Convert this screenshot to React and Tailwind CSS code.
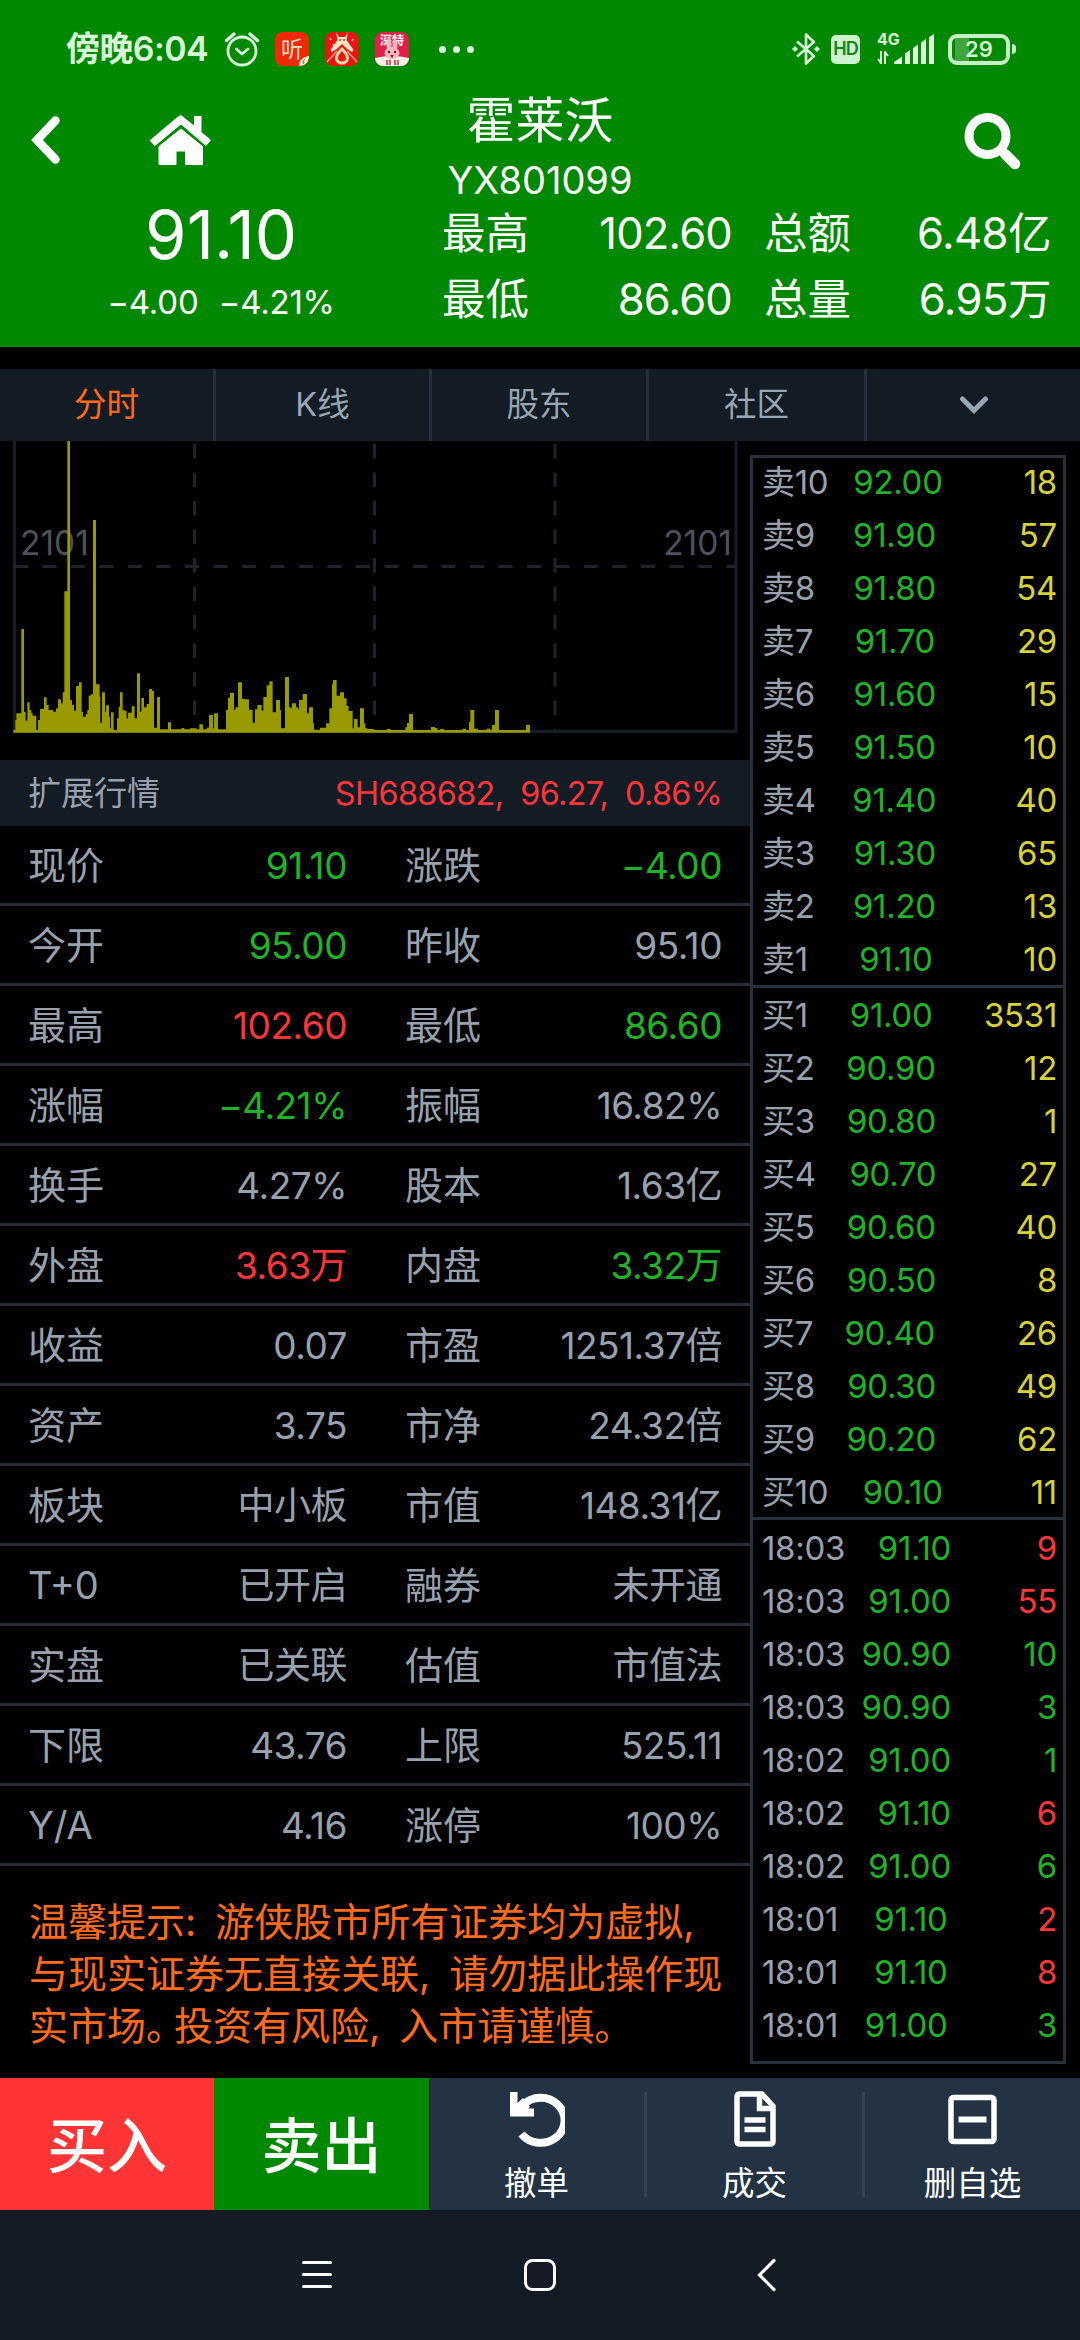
import React from 'react';

const tabs = ['分时', 'K线', '股东', '社区'];

const GREEN = 'text-[#1fb428]';
const RED = 'text-[#fb363b]';
const GRAY = 'text-[#98a1ae]';
const YELLOW = 'text-[#d6d238]';

const quoteRows = [
  ['现价', '91.10', GREEN, '涨跌', '−4.00', GREEN],
  ['今开', '95.00', GREEN, '昨收', '95.10', GRAY],
  ['最高', '102.60', RED, '最低', '86.60', GREEN],
  ['涨幅', '−4.21%', GREEN, '振幅', '16.82%', GRAY],
  ['换手', '4.27%', GRAY, '股本', '1.63亿', GRAY],
  ['外盘', '3.63万', RED, '内盘', '3.32万', GREEN],
  ['收益', '0.07', GRAY, '市盈', '1251.37倍', GRAY],
  ['资产', '3.75', GRAY, '市净', '24.32倍', GRAY],
  ['板块', '中小板', GRAY, '市值', '148.31亿', GRAY],
  ['T+0', '已开启', GRAY, '融券', '未开通', GRAY],
  ['实盘', '已关联', GRAY, '估值', '市值法', GRAY],
  ['下限', '43.76', GRAY, '上限', '525.11', GRAY],
  ['Y/A', '4.16', GRAY, '涨停', '100%', GRAY],
];

const sells = [
  ['卖10', '92.00', 18],
  ['卖9', '91.90', 57],
  ['卖8', '91.80', 54],
  ['卖7', '91.70', 29],
  ['卖6', '91.60', 15],
  ['卖5', '91.50', 10],
  ['卖4', '91.40', 40],
  ['卖3', '91.30', 65],
  ['卖2', '91.20', 13],
  ['卖1', '91.10', 10],
];

const buys = [
  ['买1', '91.00', 3531],
  ['买2', '90.90', 12],
  ['买3', '90.80', 1],
  ['买4', '90.70', 27],
  ['买5', '90.60', 40],
  ['买6', '90.50', 8],
  ['买7', '90.40', 26],
  ['买8', '90.30', 49],
  ['买9', '90.20', 62],
  ['买10', '90.10', 11],
];

const trades = [
  ['18:03', '91.10', 9, RED],
  ['18:03', '91.00', 55, RED],
  ['18:03', '90.90', 10, GREEN],
  ['18:03', '90.90', 3, GREEN],
  ['18:02', '91.00', 1, GREEN],
  ['18:02', '91.10', 6, RED],
  ['18:02', '91.00', 6, GREEN],
  ['18:01', '91.10', 2, RED],
  ['18:01', '91.10', 8, RED],
  ['18:01', '91.00', 3, GREEN],
];

// [x, top] steps of the volume outline, three units per pixel
const volume = [
  [46, 870], [49, 850], [64, 597], [72, 845], [77, 872], [82, 817], [89, 840], [94, 850], [98, 857],
  [109, 900], [114, 870], [120, 837], [132, 802], [140, 825], [146, 840], [160, 845], [168, 835],
  [174, 808], [183, 820], [188, 787], [193, 484], [202, 33], [210, 810], [216, 825], [222, 842],
  [228, 768], [237, 757], [245, 845], [249, 860], [257, 852], [262, 840], [266, 797], [272, 793],
  [279, 270], [288, 763], [299, 800], [301, 878], [306, 787], [315, 845], [318, 826], [327, 860],
  [330, 895], [333, 847], [341, 900], [351, 865], [356, 830], [360, 787], [368, 840], [374, 843],
  [380, 865], [384, 848], [395, 829], [404, 865], [411, 730], [420, 845], [424, 804], [432, 832],
  [440, 822], [447, 777], [456, 783], [462, 893], [471, 801], [480, 898], [504, 877], [513, 898],
  [545, 894], [553, 898], [570, 895], [590, 898], [598, 883], [609, 898], [620, 893], [627, 855],
  [639, 895], [642, 850], [654, 898], [678, 840], [684, 803], [690, 789], [702, 840], [706, 832],
  [714, 757], [726, 807], [735, 808], [747, 840], [758, 878], [765, 838], [772, 825], [785, 842],
  [790, 801], [800, 766], [808, 754], [818, 847], [828, 810], [840, 840], [843, 895], [855, 741],
  [867, 830], [870, 833], [876, 820], [888, 832], [894, 838], [897, 810], [908, 792], [921, 850],
  [927, 832], [939, 880], [942, 899], [960, 893], [978, 880], [988, 835], [996, 763], [999, 750],
  [1010, 797], [1020, 787], [1032, 805], [1040, 828], [1046, 843], [1058, 895], [1062, 867],
  [1073, 892], [1080, 835], [1092, 880], [1096, 895], [1102, 897], [1121, 900], [1160, 897],
  [1172, 900], [1216, 892], [1221, 879], [1227, 852], [1239, 900], [1293, 891], [1305, 894],
  [1312, 900], [1320, 897], [1332, 900], [1388, 896], [1398, 900], [1407, 876], [1411, 840],
  [1423, 896], [1434, 900], [1460, 896], [1470, 900], [1476, 885], [1485, 840], [1497, 900],
  [1578, 885], [1590, 900],
];

const volumePath =
  'M40 908V900' + volume.map(([x, y]) => `H${x}V${y}`).join('') + 'V908Z';

function StatusBar() {
  return (
    <div className="flex h-[98px] items-center pl-[66px] pr-16 text-[#d8f6d8]">
      <span className="whitespace-nowrap text-[34px] font-semibold leading-none tracking-[-0.6px]">
        傍晚6:04
      </span>
      <svg className="ml-4 h-9 w-9 shrink-0" viewBox="0 0 36 36" fill="none" stroke="currentColor" strokeLinecap="round">
        <circle cx="18" cy="20" r="14" strokeWidth="2.8" />
        <path d="M2.5 9.5 10 3M33.500 9.5 26 3" strokeWidth="3.4" />
        <path d="m12.500 18 5.500 5 6-5" strokeWidth="2.800" strokeLinejoin="round" />
      </svg>
      <div className="ml-[15px] flex gap-4">
        <span className="relative flex h-[34px] w-[34px] items-center justify-center overflow-hidden rounded-lg bg-[#f02a06] text-[22px] leading-none text-[#ffdfc8]">
          听
          <svg className="absolute bottom-0 right-0 h-[10px] w-[10px]" viewBox="0 0 10 10">
            <path d="M0 10C0 4 4 1 10 0 10 6 6 10 0 10Z" fill="#fff3d8" />
            <path d="M6 3 3.500 6H5L4.500 8" stroke="#a36b2a" fill="none" />
          </svg>
        </span>
        <svg className="h-[34px] w-[34px]" viewBox="0 0 34 34">
          <rect width="34" height="34" rx="8" fill="#e8160f" />
          <path d="M2 30 12 19M32 30 22 19" stroke="#ffb09a" strokeWidth="1.200" />
          <path d="M11 0 14 5H20L23 0 21.500 8C24 12 27 15 28.500 18L27 20C23 18 20 15 17 12 14 15 11 18 7 20L5.500 18C7 15 10 12 12.500 8Z" fill="#fbe3c4" />
          <circle cx="15" cy="8" r="1" fill="#b33" />
          <circle cx="19" cy="8" r="1" fill="#b33" />
          <path d="M17 17c-4 4-5.500 6.500-5.500 9a5.500 5 0 0 0 11 0c0-2.500-1.500-5-5.500-9Z" fill="none" stroke="#fbd9a8" strokeWidth="3" />
          <path d="M5 6l1 2M8 12l1 2M28 7l-1 2" stroke="#fbd9a8" strokeWidth="1.500" />
        </svg>
        <span className="relative h-[34px] w-[34px] overflow-hidden rounded-lg bg-[#e21f49] text-center text-[12px] font-bold leading-[17px] text-white">
          深特
          <svg className="absolute inset-0 h-full w-full" viewBox="0 0 34 34">
            <path d="M0 26Q17 22 34 26V34H0Z" fill="#fff3e8" />
            <ellipse cx="14" cy="13" rx="2.500" ry="6" fill="#f9b6bd" />
            <ellipse cx="20" cy="13" rx="2.500" ry="6" fill="#f9b6bd" />
            <ellipse cx="17" cy="21" rx="7.500" ry="6" fill="#f9b6bd" />
            <circle cx="14" cy="20" r="1.200" fill="#5d1a25" />
            <circle cx="20" cy="20" r="1.200" fill="#5d1a25" />
            <path d="M15 23h4l-2 3Z" fill="#8b1528" />
            <path d="M12 28v5M15 28v5M20 28v5M23 28v5" stroke="#d3203a" strokeWidth="1.500" />
          </svg>
        </span>
      </div>
      <div className="ml-[30px] flex gap-[7px]">
        <i className="h-[7px] w-[7px] rounded-full bg-current" />
        <i className="h-[7px] w-[7px] rounded-full bg-current" />
        <i className="h-[7px] w-[7px] rounded-full bg-current" />
      </div>

      <div className="ml-auto flex items-center">
        <svg className="h-[34px] w-7" viewBox="0 0 28 34" fill="none" stroke="currentColor" strokeWidth="2.600">
          <path d="M5 9.500 22 24 14 31.500V2.500L22 10 5 24.500" strokeLinejoin="round" />
          <path d="M3 14.500 5.500 17 3 19.500.5 17ZM25 14.500 27.500 17 25 19.500 22.500 17Z" fill="currentColor" strokeWidth="1" />
        </svg>
        <span className="ml-[11px] flex h-[29px] w-[29px] items-center justify-center rounded-[5px] bg-[#cdf3cd] text-[18px] font-semibold leading-none tracking-[-1px] text-[#118711]">
          HD
        </span>
        <div className="ml-[17px] flex h-[34px] w-[57px] items-end">
          <div className="flex h-full w-[17px] flex-col justify-between">
            <span className="text-[16px] font-bold leading-[14px]">4G</span>
            <svg className="mb-[2px] h-[13px] w-3" viewBox="0 0 12 13" fill="none" stroke="currentColor" strokeWidth="2">
              <path d="M1 8 4 12V0M11 5 8 1V13" />
            </svg>
          </div>
          <svg className="mb-[2px] h-[30px] w-10" viewBox="0 0 40 30" fill="currentColor">
            <path d="M0 30V28L8 22.500V30ZM11 30V19.500L16 16V30ZM19 30V14L24 10.500V30ZM27 30V8.500L32 5V30ZM35 30V3L40 0V30Z" />
          </svg>
        </div>
        <div className="ml-[14px] flex items-center">
          <div className="flex h-[31px] w-[62px] items-center justify-center rounded-[9px] border-4 border-[#c6f0c6] bg-[linear-gradient(90deg,transparent_3px,#3fa53f_3px,#3fa53f_17px,transparent_17px)] text-[22px] font-semibold leading-none">
            29
          </div>
          <i className="ml-[2px] h-[10px] w-1 rounded-r bg-[#c6f0c6]" />
        </div>
      </div>
    </div>
  );
}

function Header() {
  return (
    <header className="h-[347px] bg-[#008800] text-white">
      <StatusBar />
      <div className="grid h-[100px] grid-cols-[300px_1fr_300px]">
        <div className="flex items-start pl-[30px] pt-[17px]">
          <svg className="h-[50px] w-8" viewBox="0 0 32 50" fill="none" stroke="currentColor" strokeWidth="8.500" strokeLinecap="round">
            <path d="M25.500 5.500 7 25 25.500 44.500" />
          </svg>
          <svg className="ml-[86px] h-[51px] w-[64px]" viewBox="0 0 64 51" fill="currentColor">
            <path d="M33 0 46 10.500V1H53.500V17L63 25 58 31 33 9.500 7 31 1.500 25.500 30 1.500Z" strokeLinejoin="round" />
            <path d="M33 14 54.500 31.500V49.500H37.500V36H28V49.500H11V31.500Z" stroke="currentColor" strokeLinejoin="round" />
          </svg>
        </div>
        <div className="-mt-2 text-center">
          <div className="text-[49px] leading-[61px]">霍莱沃</div>
          <div className="text-[38px] leading-[58px]">YX801099</div>
        </div>
        <div className="flex items-start justify-end pr-[59px] pt-[15px]">
          <svg className="h-[57px] w-[57px]" viewBox="0 0 57 57" fill="none" stroke="currentColor">
            <circle cx="23.500" cy="23" r="18.500" strokeWidth="9" />
            <path d="m41 41 10 10" strokeWidth="10.500" strokeLinecap="round" />
          </svg>
        </div>
      </div>
      <div className="flex">
        <div className="w-[442px] text-center">
          <div className="text-[67px] leading-[74px]">91.10</div>
          <div className="flex justify-center gap-5 text-[33px] leading-[60px] tracking-[-0.2px]">
            <span>−4.00</span>
            <span>−4.21%</span>
          </div>
        </div>
        <div className="grid w-[609px] grid-cols-[auto_1fr_auto_1fr] gap-x-8 pt-[2px] text-[43.500px] leading-[66px]">
          <span>最高</span>
          <span className="-ml-8 w-[203px] text-right tracking-[-0.8px]">102.60</span>
          <span>总额</span>
          <span className="whitespace-nowrap text-right tracking-[-0.5px]">6.48亿</span>
          <span>最低</span>
          <span className="-ml-8 w-[203px] text-right tracking-[-0.8px]">86.60</span>
          <span>总量</span>
          <span className="whitespace-nowrap text-right tracking-[-0.5px]">6.95万</span>
        </div>
      </div>
    </header>
  );
}

function Tabs() {
  return (
    <nav className="mt-[22px] grid h-[72px] grid-cols-[216px_216px_217px_218px_1fr] bg-[#131b25] text-[32.500px] text-[#98a6b4]">
      {tabs.map((tab, i) => (
        <div
          key={tab}
          className={`flex items-center justify-center border-r-[3px] border-[#25303c] pt-px ${
            i === 0 ? 'text-[#ff6b1c]' : ''
          }`}
        >
          {tab}
        </div>
      ))}
      <div className="flex items-center justify-center">
        <svg className="h-[18px] w-[30px]" viewBox="0 0 30 18" fill="none" stroke="currentColor" strokeWidth="5" strokeLinecap="round">
          <path d="m3.500 3 11.500 11.500L26.500 3" />
        </svg>
      </div>
    </nav>
  );
}

function VolumeChart() {
  return (
    <svg className="block h-[319px] w-[750px]" viewBox="0 441 750 319">
      <g fill="none" stroke="#1f242b" strokeWidth="3">
        <path d="M14.500 441V731.500H736V441" stroke="#161f26" />
        <path d="M194.500 444V731M374.500 444V731M555 444V731" strokeDasharray="14.500 14" />
        <path d="M14 566.500H736" strokeDasharray="14 14.500" />
      </g>
      <g fill="#4d515b" fontSize="33.500">
        <text x="20" y="554.500">2101</text>
        <text x="732" y="554.500" textAnchor="end">2101</text>
      </g>
      <path d={volumePath} fill="#999900" transform="translate(0 430) scale(.33333)" />
    </svg>
  );
}

function QuoteTable() {
  return (
    <div className="text-[38px] text-[#98a1ae]">
      {quoteRows.map(([l1, v1, c1, l2, v2, c2]) => (
        <div key={l1} className="flex h-20 items-center border-b-[3px] border-[#252e38] px-[28px] pt-[2px]">
          <span>{l1}</span>
          <span className={`flex-1 text-right text-[37px] tracking-[-0.5px] ${c1}`}>{v1}</span>
          <span className="flex w-[375px] items-center justify-between pl-[58px]">
            <span>{l2}</span>
            <span className={`text-[37px] tracking-[-0.5px] ${c2}`}>{v2}</span>
          </span>
        </div>
      ))}
    </div>
  );
}

function BookRow({ label, price, count, color }) {
  return (
    <div className="flex h-[53px] items-center">
      <span>{label}</span>
      <span className="flex-1 text-right text-[#1fb428]">{price}</span>
      <span className={`flex-1 text-right ${color}`}>{count}</span>
    </div>
  );
}

function OrderBook() {
  return (
    <aside className="mt-[14px] h-[1609px] w-[316px] border-[3px] border-[#27303b] text-[33px] tracking-[-0.3px] text-[#98a1ae]">
      <div className="-mt-[2px] pl-[9px] pr-[6px]">
        {sells.map(([label, price, count]) => (
          <BookRow key={label} label={label} price={price} count={count} color={YELLOW} />
        ))}
      </div>
      <div className="-mt-px mb-px h-[3px] bg-[#27303b]" />
      <div className="pl-[9px] pr-[6px]">
        {buys.map(([label, price, count]) => (
          <BookRow key={label} label={label} price={price} count={count} color={YELLOW} />
        ))}
      </div>
      <div className="-mt-[2px] mb-[2px] h-[3px] bg-[#27303b]" />
      <div className="pl-[9px] pr-[6px]">
        {trades.map(([time, price, count, color], i) => (
          <BookRow key={i} label={time} price={price} count={count} color={color} />
        ))}
      </div>
    </aside>
  );
}

function ActionBar() {
  return (
    <div className="flex h-[132px] text-white">
      <button className="w-[214px] bg-[#ff3535] pt-[3px] text-[60px] font-medium">买入</button>
      <button className="w-[215px] bg-[#008800] pt-[3px] text-[60px] font-medium">卖出</button>
      <div className="flex flex-1 items-center bg-[#233343] text-[32.500px] leading-[44px]">
        <div className="flex w-[215px] flex-col items-center pt-[9px]">
          <svg className="h-[56px] w-[56px]" viewBox="0 0 56 56">
            <path d="M12.500 43A24 22.500 0 1 0 14 14" fill="none" stroke="currentColor" strokeWidth="8" />
            <path d="M1 1H8.500V12L14 7 21 16 19 17.500H25V25.500H1Z" fill="currentColor" />
          </svg>
          <span className="mt-[15px]">撤单</span>
        </div>
        <i className="h-[105px] w-[3px] bg-[#334351]" />
        <div className="flex w-[215px] flex-col items-center pt-[9px]">
          <svg className="h-[56px] w-[42px]" viewBox="0 0 42 56" fill="none" stroke="currentColor" strokeWidth="5.500">
            <path d="M3 6Q3 3 6 3H28L39 15V50Q39 53 36 53H6Q3 53 3 50Z" strokeLinejoin="round" />
            <path d="M25.500 3V17.500H39M10.500 29H31.500M10.500 38.500H31.500" />
          </svg>
          <span className="mt-[15px]">成交</span>
        </div>
        <i className="h-[105px] w-[3px] bg-[#334351]" />
        <div className="flex flex-1 flex-col items-center pt-[9px]">
          <svg className="h-[56px] w-[49px]" viewBox="0 0 49 56" fill="none" stroke="currentColor" strokeWidth="5.500">
            <rect x="3" y="6.500" width="43" height="44" rx="2.500" />
            <path d="M10.500 28.500H38.500" strokeWidth="6" />
          </svg>
          <span className="mt-[15px]">删自选</span>
        </div>
      </div>
    </div>
  );
}

function SystemNav() {
  return (
    <div className="flex h-[130px] items-center bg-[#141b25] pl-[301px] text-white">
      <svg className="h-8 w-8" viewBox="0 0 32 32" stroke="currentColor" strokeWidth="3" strokeLinecap="round">
        <path d="M2.500 3.500H29.500M2.500 15.500H29.500M2.500 27.500H29.500" />
      </svg>
      <svg className="ml-[190px] h-[34px] w-[34px]" viewBox="0 0 34 34" fill="none" stroke="currentColor" strokeWidth="3">
        <rect x="2.500" y="2.500" width="29" height="29" rx="7" />
      </svg>
      <svg className="ml-[200px] h-[34px] w-5" viewBox="0 0 20 34" fill="none" stroke="currentColor" strokeWidth="3.200" strokeLinecap="round">
        <path d="M17 2.500 2.500 17 17 31.500" />
      </svg>
    </div>
  );
}

function App() {
  return (
    <div className="h-[2340px] w-[1080px] overflow-hidden bg-black font-['Inter','Noto_Sans_CJK_SC',sans-serif]">
      <Header />
      <Tabs />
      <main className="flex h-[1637px]">
        <section className="w-[750px]">
          <VolumeChart />
          <div className="flex h-[66px] items-center justify-between bg-[#131b25] px-[28px] pt-[2px] text-[33px] text-[#98a1ae]">
            <span>扩展行情</span>
            <span className="whitespace-pre text-[32.500px] tracking-[-0.7px] text-[#fb363b]">SH688682,  96.27,  0.86%</span>
          </div>
          <QuoteTable />
          <p className="mt-[30px] whitespace-nowrap pl-[29px] text-[39px] leading-[52px] text-[#ff6b1c] [word-spacing:8px]">
            温馨提示: 游侠股市所有证券均为虚拟,
            <br />
            与现实证券无直接关联, 请勿据此操作现
            <br />
            实市场<span className="tracking-[-11px]">。</span>投资有风险, 入市请谨慎。
          </p>
        </section>
        <OrderBook />
      </main>
      <ActionBar />
      <SystemNav />
    </div>
  );
}

export default App;
